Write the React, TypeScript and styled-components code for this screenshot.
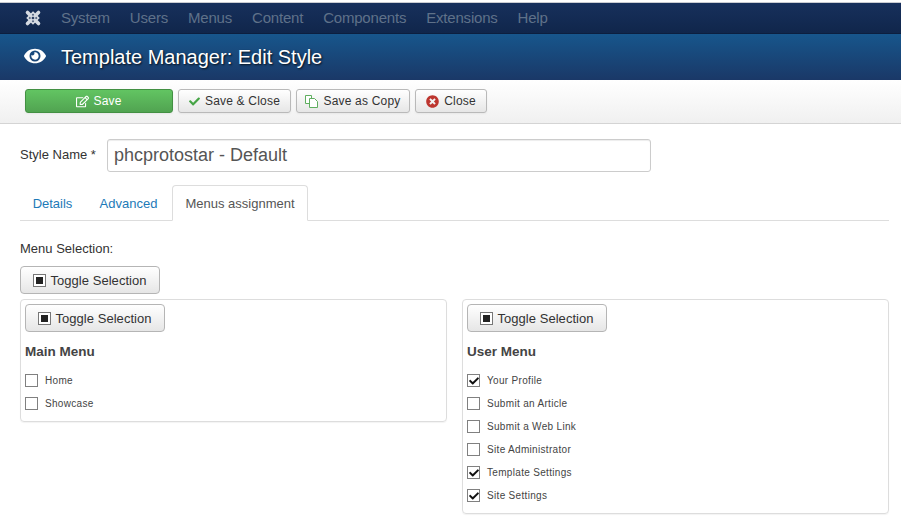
import React from "react";
import styled, { createGlobalStyle } from "styled-components";
import { FaEye, FaRegEdit, FaCheck, FaTimesCircle } from "react-icons/fa";

const Global = createGlobalStyle`
  html, body { margin: 0; padding: 0; background: #fff; }
  body { font-family: "Liberation Sans", Arial, sans-serif; color: #333; font-size: 13px; }
`;
const Page = styled.div`width: 901px; height: 527px; overflow: hidden; background: #fff; display: flex; flex-direction: column;`;
const Navbar = styled.nav`
  height: 32px; margin-top: 2px; box-sizing: border-box; flex: none;
  background: linear-gradient(#17305c, #10264b); border-top: 1px solid #c9ccd2;
  border-bottom: 1px solid #0c1f3f;
  display: flex; align-items: center; padding-left: 24px;
`;
const Logo = styled.svg`width: 18px; height: 18px; margin-right: 19px; flex: none;`;
const NavItem = styled.span`font-size: 15px; letter-spacing: -.2px; color: #5f7189; margin-right: 20px; margin-top: -1px;`;
const Header = styled.header`
  height: 46px; flex: none; box-sizing: border-box;
  background: linear-gradient(#17568c, #1a3867);
  display: flex; align-items: center; padding-left: 24px; color: #fff;
`;
const EyeWrap = styled.span`width: 37px; display: flex; flex: none; margin-top: -2px;`;
const Title = styled.h1`font-size: 20px; font-weight: 400; margin: 0; color: #fff; text-shadow: 1px 1px 2px rgba(0,0,0,.8);`;
const Toolbar = styled.div`
  height: 44px; flex: none; box-sizing: border-box; padding: 9px 0 0 25px;
  background: linear-gradient(#fff, #f0f0f0); border-bottom: 1px solid #d4d4d4;
  display: flex; gap: 5px; align-items: flex-start;
`;
const Btn = styled.button<{ $w: number }>`
  width: ${(p) => p.$w}px; height: 24px; box-sizing: border-box; padding: 0;
  font: 12px "Liberation Sans", Arial, sans-serif; letter-spacing: .2px; color: #333;
  border: 1px solid #b9b9b9; border-radius: 3px;
  background: linear-gradient(#fff, #e6e6e6);
  box-shadow: 0 1px 2px rgba(0,0,0,.05);
  display: flex; align-items: center; justify-content: center; gap: 5px;
`;
const SaveBtn = styled(Btn)`
  background: linear-gradient(#62c462, #51a351); border-color: #439043; color: #fff; gap: 4px;
`;
const CopyIcon = styled.svg`width: 13px; height: 13px; flex: none;`;
const Content = styled.main`padding: 15px 12px 0 20px; display: flex; flex-direction: column; flex: 1;`;
const NameRow = styled.div`display: flex; align-items: center; height: 33px;`;
const NameLabel = styled.label`width: 87px; font-size: 13px; flex: none; margin-top: -2px;`;
const NameInput = styled.div`
  width: 544px; height: 33px; box-sizing: border-box; border: 1px solid #ccc; border-radius: 3px;
  box-shadow: inset 0 1px 1px rgba(0,0,0,.075);
  font-size: 18px; line-height: 31px; padding-left: 6px; color: #555;
`;
const Tabs = styled.div`
  margin-top: 13px; height: 36px; box-sizing: border-box; border-bottom: 1px solid #ddd;
  display: flex;
`;
const Tab = styled.span<{ $w: number; $active?: boolean }>`
  width: ${(p) => p.$w}px; height: 36px; box-sizing: border-box; flex: none;
  display: flex; align-items: center; justify-content: center;
  font-size: 13px; color: ${(p) => (p.$active ? "#555" : "#1d7ab8")};
  ${(p) => p.$active ? "background:#fff;border:1px solid #ddd;border-bottom-color:#fff;border-radius:4px 4px 0 0;" : ""}
`;
const Section = styled.p`margin: 20px 0 0; height: 15px; line-height: 15px; font-size: 13px;`;
const ToggleBtn = styled.button<{ $top?: number }>`
  width: 140px; height: 28px; box-sizing: border-box; padding: 0; flex: none;
  margin-top: ${(p) => p.$top ?? 0}px;
  font: 13px "Liberation Sans", Arial, sans-serif; letter-spacing: .05px; color: #333;
  border: 1px solid #b5b5b5; border-radius: 4px;
  background: linear-gradient(#fff, #e6e6e6);
  display: flex; align-items: center; justify-content: center; gap: 4px;
`;
const ToggleIcon = styled.span`
  width: 13px; height: 13px; box-sizing: border-box; border: 1px solid #777; background: #fff;
  display: flex; align-items: center; justify-content: center;
  &::after { content: ""; width: 7px; height: 7px; background: #222; }
`;
const Panels = styled.div`display: grid; grid-template-columns: 427px 427px; column-gap: 15px; margin-top: 5px; align-items: start;`;
const Panel = styled.section`
  border: 1px solid #ddd; border-radius: 4px; box-sizing: border-box; padding: 4px 4px 6px;
  box-shadow: 0 1px 1px rgba(0,0,0,.05);
`;
const PanelTitle = styled.h4`margin: 12px 0 10px; font-size: 13.5px; line-height: 15px; font-weight: 700; color: #444;`;
const MenuRow = styled.div`height: 23px; display: flex; align-items: center; gap: 7px; font-size: 10px; letter-spacing: .32px; color: #444;`;
const Box = styled.span`
  width: 13px; height: 13px; box-sizing: border-box; border: 1px solid #808080; background: #fff; flex: none;
  display: flex; align-items: center; justify-content: center;
`;

const Toggle = ({ top }: { top?: number }) => (
  <ToggleBtn $top={top}><ToggleIcon />Toggle Selection</ToggleBtn>
);
const Item = ({ label, on }: { label: string; on?: boolean }) => (
  <MenuRow>
    <Box>{on && <FaCheck size={10} color="#111" />}</Box>
    {label}
  </MenuRow>
);

export default function App() {
  return (
    <Page>
      <Global />
      <Navbar>
        <Logo viewBox="0 0 18 18" fill="none" strokeLinecap="round">
          <path d="M3.5 3.5 L14.5 14.5 M14.5 3.5 L3.5 14.5" stroke="#d5dae2" strokeWidth="3.6" />
          <path d="M9 3.5 L14.5 9 L9 14.5 L3.5 9 Z" stroke="#d5dae2" strokeWidth="1.8" />
          <path d="M9 7.4 L10.6 9 L9 10.6 L7.4 9 Z" fill="#1a2f55" />
          <path d="M9 4.6 L10.2 5.8 L9 7 L7.8 5.8 Z M9 11 L10.2 12.2 L9 13.4 L7.8 12.2 Z M4.6 9 L5.8 7.8 L7 9 L5.8 10.2 Z M11 9 L12.2 7.8 L13.4 9 L12.2 10.2 Z" fill="#5d6c86" />
        </Logo>
        {["System", "Users", "Menus", "Content", "Components", "Extensions", "Help"].map((n) => (
          <NavItem key={n}>{n}</NavItem>
        ))}
      </Navbar>
      <Header>
        <EyeWrap><FaEye size={22} color="#fff" /></EyeWrap>
        <Title>Template Manager: Edit Style</Title>
      </Header>
      <Toolbar>
        <SaveBtn $w={148}><FaRegEdit size={13} color="#fff" />Save</SaveBtn>
        <Btn $w={113}><FaCheck size={11} color="#46a546" />Save &amp; Close</Btn>
        <Btn $w={114}>
          <CopyIcon viewBox="0 0 13 13" fill="#fff" stroke="#5fae5f" strokeWidth="1">
            <path d="M.5.5h6v8h-6z" />
            <path d="M4.5 3.5h5l3 3v6h-8z" />
          </CopyIcon>
          Save as Copy
        </Btn>
        <Btn $w={72}><FaTimesCircle size={13} color="#bd362f" />Close</Btn>
      </Toolbar>
      <Content>
        <NameRow>
          <NameLabel>Style Name *</NameLabel>
          <NameInput>phcprotostar - Default</NameInput>
        </NameRow>
        <Tabs>
          <Tab $w={65}>Details</Tab>
          <Tab $w={87}>Advanced</Tab>
          <Tab $w={136} $active>Menus assignment</Tab>
        </Tabs>
        <Section>Menu Selection:</Section>
        <Toggle top={10} />
        <Panels>
          <Panel>
            <Toggle />
            <PanelTitle>Main Menu</PanelTitle>
            <Item label="Home" />
            <Item label="Showcase" />
          </Panel>
          <Panel>
            <Toggle />
            <PanelTitle>User Menu</PanelTitle>
            <Item label="Your Profile" on />
            <Item label="Submit an Article" />
            <Item label="Submit a Web Link" />
            <Item label="Site Administrator" />
            <Item label="Template Settings" on />
            <Item label="Site Settings" on />
          </Panel>
        </Panels>
      </Content>
    </Page>
  );
}
